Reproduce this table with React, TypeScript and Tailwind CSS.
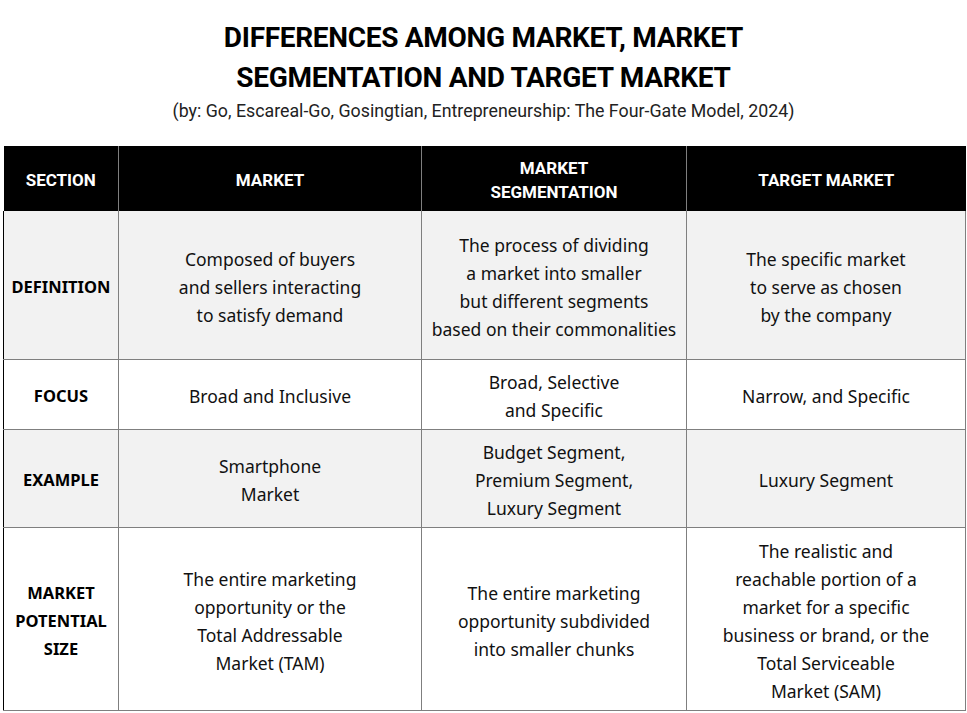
const rows = [
  {
    label: ["DEFINITION"],
    bg: "bg-[#f2f2f2]",
    h: "h-[148px]",
    cells: [
      ["Composed of buyers", "and sellers interacting", "to satisfy demand"],
      ["The process of dividing", "a market into smaller", "but different segments", "based on their commonalities"],
      ["The specific market", "to serve as chosen", "by the company"],
    ],
  },
  {
    label: ["FOCUS"],
    bg: "bg-white",
    h: "h-[70px]",
    cells: [["Broad and Inclusive"], ["Broad, Selective", "and Specific"], ["Narrow, and Specific"]],
  },
  {
    label: ["EXAMPLE"],
    bg: "bg-[#f2f2f2]",
    h: "h-[98px]",
    cells: [
      ["Smartphone", "Market"],
      ["Budget Segment,", "Premium Segment,", "Luxury Segment"],
      ["Luxury Segment"],
    ],
  },
  {
    label: ["MARKET", "POTENTIAL", "SIZE"],
    bg: "bg-white",
    h: "h-[183px]",
    cells: [
      ["The entire marketing", "opportunity or the", "Total Addressable", "Market (TAM)"],
      ["The entire marketing", "opportunity subdivided", "into smaller chunks"],
      ["The realistic and", "reachable portion of a", "market for a specific", "business or brand, or the", "Total Serviceable", "Market (SAM)"],
    ],
  },
];

function Lines({ lines }: { lines: string[] }) {
  return (
    <>
      {lines.map((l, i) => (
        <div key={i}>{l}</div>
      ))}
    </>
  );
}

export default function App() {
  return (
    <div className="h-[713px] w-[967px] overflow-hidden bg-white font-[Roboto,sans-serif] text-[#111]">
      <div className="pt-[18px] text-center">
        <h1 className="text-[28px] font-bold leading-[40px] tracking-[-0.3px] text-black">
          DIFFERENCES AMONG MARKET, MARKET
          <br />
          SEGMENTATION AND TARGET MARKET
        </h1>
        <p className="mt-[3px] text-[17.8px] leading-[20px] text-[#222]">
          (by: Go, Escareal-Go, Gosingtian, Entrepreneurship: The Four-Gate Model, 2024)
        </p>
      </div>

      <table className="ml-[3px] mt-[25px] w-[962px] table-fixed border-collapse text-center">
        <colgroup>
          <col className="w-[115px]" />
          <col className="w-[303px]" />
          <col className="w-[265px]" />
          <col className="w-[279px]" />
        </colgroup>
        <thead>
          <tr className="h-[65px] bg-black text-[17px] font-bold leading-[24px] text-white">
            <th className="border-r border-[#7f7f7f] pt-[3px]">SECTION</th>
            <th className="border-r border-[#7f7f7f] pt-[3px]">MARKET</th>
            <th className="border-r border-[#7f7f7f] pt-[3px]">
              MARKET
              <br />
              SEGMENTATION
            </th>
            <th className="pt-[3px]">TARGET MARKET</th>
          </tr>
        </thead>
        <tbody className="font-['Noto_Sans',sans-serif] text-[17.5px] leading-[28px]">
          {rows.map((r, i) => (
            <tr key={i} className={`${r.h} ${r.bg}`}>
              <td className="border-b border-l border-r border-b-[#7f7f7f] border-l-black border-r-[#7f7f7f] pt-[4px] text-[16.5px] font-bold text-black">
                <Lines lines={r.label} />
              </td>
              {r.cells.map((c, j) => (
                <td key={j} className="border-b border-r border-b-[#7f7f7f] border-r-[#7f7f7f] pt-[4px]">
                  <Lines lines={c} />
                </td>
              ))}
            </tr>
          ))}
        </tbody>
      </table>
    </div>
  );
}
